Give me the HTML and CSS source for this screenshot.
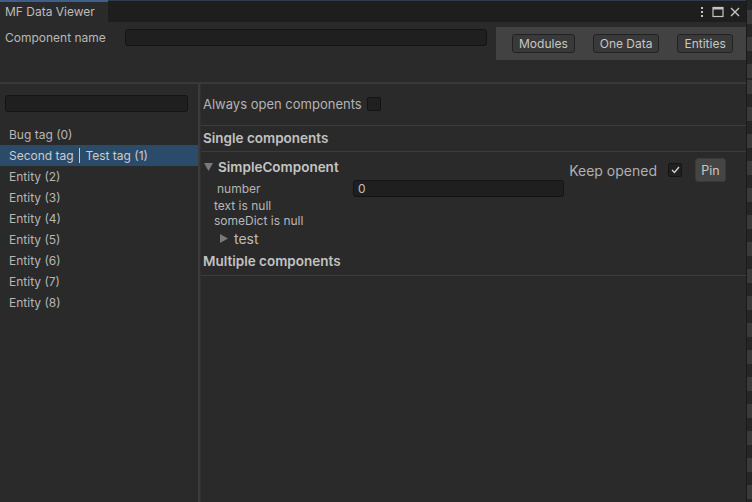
FILE: index.html
```html
<!DOCTYPE html>
<html>
<head>
<meta charset="utf-8">
<link rel="stylesheet" href="styles.css">
</head>
<body>
<div class="screen">
  <div class="window">
    <div class="tabbar">
      <div class="tab">MF Data Viewer</div>
      <div class="tab-spacer"></div>
      <div class="win-icons">
        <svg width="10" height="12" viewBox="0 0 10 12"><rect x="4" y="1" width="2" height="2" fill="#c4c4c4"/><rect x="4" y="5" width="2" height="2" fill="#c4c4c4"/><rect x="4" y="9" width="2" height="2" fill="#c4c4c4"/></svg>
        <svg width="12" height="12" viewBox="0 0 12 12"><rect x="1" y="1.5" width="10" height="9" fill="none" stroke="#c4c4c4" stroke-width="1.2"/><rect x="1" y="1.5" width="10" height="2" fill="#c4c4c4"/></svg>
        <svg width="12" height="12" viewBox="0 0 12 12"><path d="M2 2 L10 10 M10 2 L2 10" stroke="#c4c4c4" stroke-width="1.4"/></svg>
      </div>
    </div>
    <div class="toolbar">
      <div class="name-row">
        <span class="label">Component name</span>
        <div class="field name-field"></div>
      </div>
      <div class="btn-panel">
        <button class="btn">Modules</button>
        <button class="btn">One Data</button>
        <button class="btn">Entities</button>
      </div>
    </div>
    <div class="main">
      <div class="left">
        <div class="field search"></div>
        <ul class="list">
          <li>Bug tag (0)</li>
          <li class="selected">Second tag <span class="bar"></span> Test tag (1)</li>
          <li>Entity (2)</li>
          <li>Entity (3)</li>
          <li>Entity (4)</li>
          <li>Entity (5)</li>
          <li>Entity (6)</li>
          <li>Entity (7)</li>
          <li>Entity (8)</li>
        </ul>
      </div>
      <div class="splitter"></div>
      <div class="right">
        <div class="always-row">
          <span>Always open components</span>
          <span class="check"></span>
        </div>
        <div class="section-title">Single components</div>
        <div class="component">
          <div class="comp-head">
            <div class="comp-title">
              <svg class="tri" width="9" height="8" viewBox="0 0 9 8"><path d="M0 0 H9 L4.5 8 Z" fill="#7a7a7a"/></svg>
              <span>SimpleComponent</span>
            </div>
            <div class="comp-actions">
              <span class="keep">Keep opened</span>
              <span class="check checked"><svg width="9" height="8" viewBox="0 0 9 8"><path d="M1 4 L3.5 6.5 L8 1" fill="none" stroke="#d0d0d0" stroke-width="1.4"/></svg></span>
              <button class="pin">Pin</button>
            </div>
          </div>
          <div class="prop-row">
            <span class="prop-label">number</span>
            <div class="field num-field">0</div>
          </div>
          <div class="null-line first">text is null</div>
          <div class="null-line">someDict is null</div>
          <div class="sub-fold">
            <svg width="8" height="9" viewBox="0 0 8 9"><path d="M0 0 V9 L8 4.5 Z" fill="#7a7a7a"/></svg>
            <span>test</span>
          </div>
        </div>
        <div class="section-title multi">Multiple components</div>
      </div>
    </div>
  </div>
  <div class="edge"></div>
</div>
</body>
</html>
```

FILE: styles.css
```css
* { box-sizing: border-box; }
html, body { margin: 0; padding: 0; }
body {
  width: 752px;
  height: 502px;
  overflow: hidden;
  background: #2a2a2a;
  font-family: Inter, "Noto Sans", sans-serif;
  font-size: 12px;
  color: #b8b8b8;
}
.screen { display: flex; width: 752px; height: 502px; }
.window {
  width: 747px;
  height: 502px;
  display: flex;
  flex-direction: column;
  background: #2a2a2a;
  border-right: 1px solid #1a1a1a;
}
.edge {
  width: 5px;
  height: 502px;
  background:
    repeating-linear-gradient(180deg, #3a3a3a 0 14px, #262626 14px 27px);
  background-position: 0 80px;
}
.tabbar {
  height: 22px;
  flex: none;
  display: flex;
  background: #1e1e1e;
  border-top: 1px solid #2f3c4c;
}
.tab {
  width: 108px;
  height: 22px;
  margin-top: -1px;
  background: #2a2a2a;
  border-top: 2px solid #3e5f8a;
  padding-left: 5px;
  line-height: 20px;
  font-size: 12px;
  color: #bcbcbc;
}
.tab-spacer { flex: 1; }
.win-icons {
  display: flex;
  align-items: center;
  gap: 5px;
  padding-right: 5px;
}
.toolbar {
  height: 62px;
  flex: none;
  display: flex;
  align-items: flex-start;
  border-bottom: 2px solid #393939;
}
.name-row {
  display: flex;
  align-items: center;
  padding: 7px 0 0 5px;
  flex: 1;
}
.label { width: 120px; font-size: 12px; color: #b8b8b8; }
.field {
  background: #1f1f1f;
  border: 1px solid #141414;
  border-radius: 3px;
  height: 17px;
}
.name-field { width: 362px; }
.btn-panel {
  margin-top: 5px;
  width: 250px;
  height: 33px;
  background: #424242;
  display: flex;
  align-items: center;
  padding-left: 16px;
  gap: 18px;
}
.btn {
  height: 19px;
  padding: 0 6px;
  background: #393939;
  border: 1px solid #222;
  border-radius: 3px;
  color: #c6c6c6;
  font-family: Inter, "Noto Sans", sans-serif;
  font-size: 12px;
  line-height: 17px;
}
.main { flex: 1; display: flex; }
.left { width: 198px; }
.search { margin: 11px 0 0 5px; width: 183px; }
.list { list-style: none; margin: 12px 0 0; padding: 0; }
.list li {
  height: 21px;
  line-height: 21px;
  padding-left: 9px;
  font-size: 12px;
  color: #b6b6b6;
}
.list li.selected { background: #2b4b6a; color: #cccccc; }
.bar {
  display: inline-block;
  width: 1px;
  height: 15px;
  background: #c8c8c8;
  vertical-align: -3px;
  margin: 0 2px;
}
.splitter { width: 3px; background: #3b3b3b; border-right: 1px solid #2f2f2f; }
.right { flex: 1; }
.always-row {
  height: 42px;
  display: flex;
  align-items: center;
  padding: 0 0 2px 2px;
  gap: 5px;
  font-size: 13px;
  color: #b4b4b4;
  border-bottom: 1px solid #3c3c3c;
}
.check {
  width: 14px;
  height: 14px;
  background: #202020;
  border: 1px solid #141414;
  border-radius: 2px;
  display: inline-flex;
  align-items: center;
  justify-content: center;
}
.section-title {
  height: 26px;
  line-height: 25px;
  padding-left: 2px;
  font-weight: 600;
  font-size: 13.5px;
  color: #c2c2c2;
  border-bottom: 1px solid #3c3c3c;
}
.comp-head {
  display: flex;
  justify-content: space-between;
  height: 30px;
}
.comp-title {
  display: flex;
  align-items: center;
  gap: 5px;
  padding: 0 0 0 3px;
  height: 30px;
  font-weight: 600;
  font-size: 13.5px;
  color: #c4c4c4;
}
.comp-actions {
  display: flex;
  align-items: center;
  padding-top: 6px;
  height: 30px;
}
.keep { font-size: 14px; color: #b0b0b0; margin-right: 11px; }
.checked { margin-right: 13px; }
.pin {
  width: 31px;
  height: 24px;
  background: #454545;
  border: 1px solid #3a3a3a;
  border-radius: 3px;
  color: #c6c6c6;
  font-family: Inter, "Noto Sans", sans-serif;
  font-size: 12.5px;
  margin-right: 20px;
  padding: 0;
}
.prop-row {
  display: flex;
  align-items: center;
  height: 17px;
  margin-top: -2px;
}
.prop-label { width: 152px; padding-left: 16px; font-size: 12px; color: #b4b4b4; }
.num-field {
  width: 211px;
  height: 17px;
  padding-left: 4px;
  line-height: 15px;
  font-size: 12px;
  color: #c0c0c0;
}
.null-line { padding-left: 13px; height: 15px; line-height: 15px; font-size: 12px; color: #b8b8b8; }
.null-line.first { margin-top: 1px; }
.sub-fold {
  display: flex;
  align-items: center;
  gap: 6px;
  padding-left: 19px;
  height: 20px;
  font-size: 14px;
  color: #bcbcbc;
}
.multi { height: 28px; line-height: 27px; }
```
